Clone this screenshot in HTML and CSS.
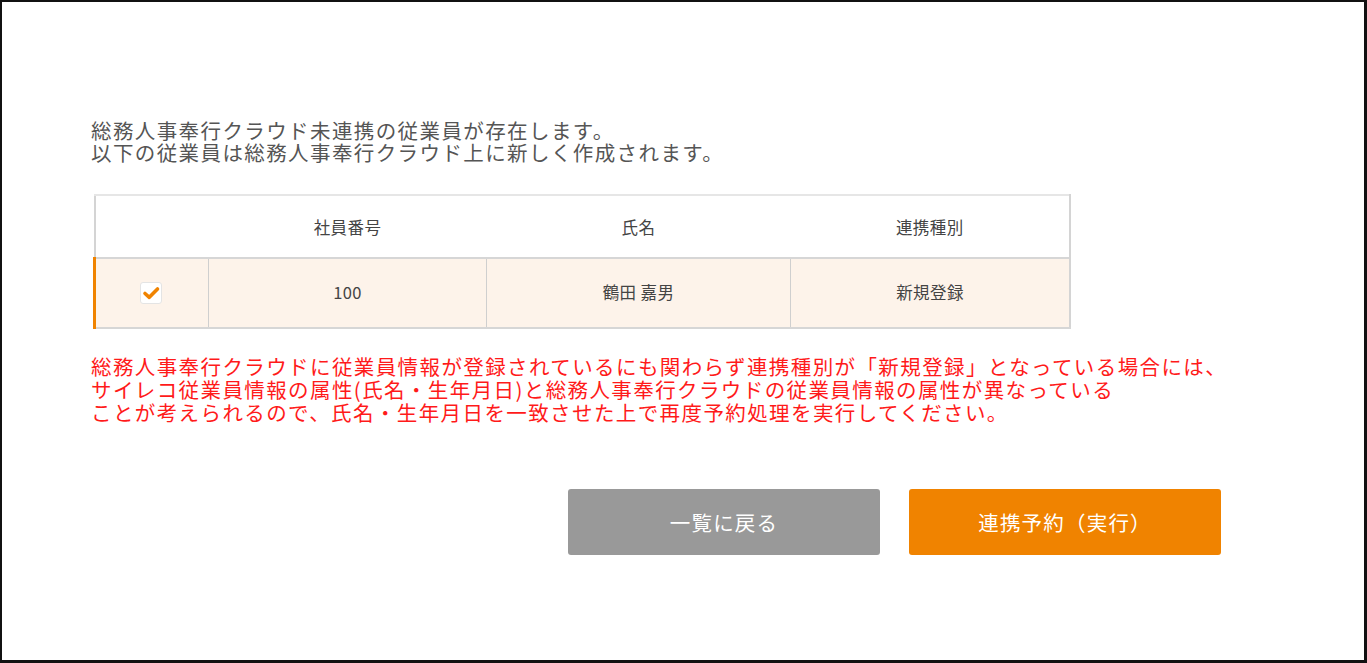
FILE: index.html
```html
<!DOCTYPE html>
<html lang="ja">
<head>
<meta charset="utf-8">
<link rel="stylesheet" href="styles.css">
</head>
<body>
<div class="frame">
  <div class="content">
    <p class="intro">総務人事奉行クラウド未連携の従業員が存在します。<br>以下の従業員は総務人事奉行クラウド上に新しく作成されます。</p>
    <table class="emp">
      <thead>
        <tr>
          <th class="c-check"></th>
          <th class="c-no">社員番号</th>
          <th class="c-name">氏名</th>
          <th class="c-type">連携種別</th>
        </tr>
      </thead>
      <tbody>
        <tr class="selected">
          <td class="c-check"><span class="checkbox"><svg viewBox="0 0 20 20" width="20" height="20"><path d="M4 10.5 L8.3 14.3 L16.5 6" fill="none" stroke="#f08300" stroke-width="3.6" stroke-linecap="round" stroke-linejoin="round"/></svg></span></td>
          <td>100</td>
          <td>鶴田 嘉男</td>
          <td>新規登録</td>
        </tr>
      </tbody>
    </table>
    <p class="warn">総務人事奉行クラウドに従業員情報が登録されているにも関わらず連携種別が「新規登録」となっている場合には、<br>サイレコ従業員情報の属性(氏名・生年月日)と総務人事奉行クラウドの従業員情報の属性が異なっている<br>ことが考えられるので、氏名・生年月日を一致させた上で再度予約処理を実行してください。</p>
    <div class="actions">
      <button class="btn btn-back">一覧に戻る</button>
      <button class="btn btn-exec">連携予約（実行）</button>
    </div>
  </div>
</div>
</body>
</html>
```
FILE: styles.css
```css
* { box-sizing: border-box; }
html, body { margin: 0; padding: 0; background: #fff; }
body {
  font-family: "Noto Sans CJK JP", "Noto Sans", sans-serif;
  width: 1367px;
  height: 663px;
  overflow: hidden;
}
.frame {
  width: 1367px;
  height: 663px;
  border: 2px solid #111;
  border-right-width: 3px;
  border-bottom-width: 3px;
}
.content {
  padding: 117px 0 0 89px;
}
.intro {
  margin: 0;
  font-size: 20.5px;
  line-height: 22px;
  color: #555;
  letter-spacing: 1.4px;
}
.emp {
  margin: 31px 0 0 2px;
  border-collapse: collapse;
  width: 978px;
  font-size: 16.5px;
  letter-spacing: 0.4px;
  color: #444;
}
.emp th {
  font-weight: normal;
  height: 63px;
  text-align: center;
  border-top: 2px solid #e6e6e6;
  padding: 0;
}
.emp th:first-child { border-left: 2px solid #d4d4d4; }
.emp th:last-child { border-right: 2px solid #d4d4d4; }
.emp td {
  height: 70px;
  text-align: center;
  background: #fdf3ea;
  border: 1px solid #cfcfcf;
  border-top: 2px solid #d6d6d6;
  border-bottom: 2px solid #d6d6d6;
  padding: 0 0 3px 0;
}
.emp td:first-child { border-left: 3px solid #f08300; }
.emp td:last-child { border-right: 2px solid #d4d4d4; }
.c-check { width: 114px; }
.c-no { width: 278px; }
.c-name { width: 304px; }
.checkbox {
  display: inline-flex;
  width: 22px;
  height: 22px;
  background: #fff;
  border: 1px solid #e4e4e4;
  border-radius: 3px;
  vertical-align: middle;
  align-items: center;
  justify-content: center;
  margin-left: -2px;
}
.checkbox svg { display: block; }
.warn {
  margin: 26px 0 0 0;
  font-size: 20.5px;
  line-height: 23px;
  color: #ff1a1a;
  letter-spacing: 1.4px;
}
.actions {
  display: flex;
  gap: 29px;
  margin: 65px 0 0 477px;
}
.btn {
  width: 312px;
  height: 66px;
  border: none;
  border-radius: 3px;
  color: #fff;
  font-family: "Noto Sans CJK JP", "Noto Sans", sans-serif;
  font-size: 20.5px;
  letter-spacing: 1.2px;
  padding: 0;
}
.btn-back { background: #999; }
.btn-exec { background: #f08300; }
```
